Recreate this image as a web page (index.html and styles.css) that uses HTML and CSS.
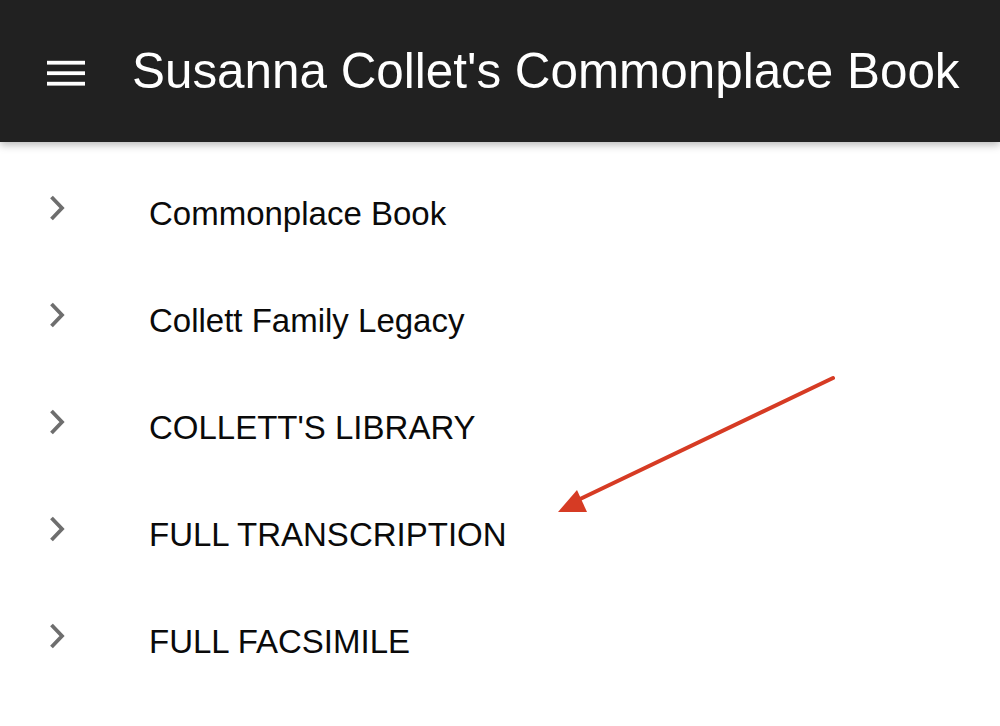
FILE: index.html
```html
<!DOCTYPE html>
<html lang="en">
<head>
<meta charset="utf-8">
<title>Susanna Collet's Commonplace Book</title>
<link rel="stylesheet" href="styles.css">
</head>
<body>
<header class="topbar">
  <svg class="menu-icon" width="38" height="26" viewBox="0 0 38 26" aria-hidden="true">
    <rect x="0" y="0.8" width="38" height="3.8" fill="#fff"/>
    <rect x="0" y="11.3" width="38" height="3.8" fill="#fff"/>
    <rect x="0" y="21.8" width="38" height="3.8" fill="#fff"/>
  </svg>
  <h1 class="title">Susanna Collet's Commonplace Book</h1>
</header>
<main class="nav">
  <div class="nav-item">
    <svg class="chevron" width="18" height="28" viewBox="0 0 18 28" aria-hidden="true"><path d="M3.5 3 L14 14 L3.5 25" fill="none" stroke="#6e6e6e" stroke-width="3.8"/></svg>
    <span class="label">Commonplace Book</span>
  </div>
  <div class="nav-item">
    <svg class="chevron" width="18" height="28" viewBox="0 0 18 28" aria-hidden="true"><path d="M3.5 3 L14 14 L3.5 25" fill="none" stroke="#6e6e6e" stroke-width="3.8"/></svg>
    <span class="label">Collett Family Legacy</span>
  </div>
  <div class="nav-item">
    <svg class="chevron" width="18" height="28" viewBox="0 0 18 28" aria-hidden="true"><path d="M3.5 3 L14 14 L3.5 25" fill="none" stroke="#6e6e6e" stroke-width="3.8"/></svg>
    <span class="label">COLLETT'S LIBRARY</span>
  </div>
  <div class="nav-item">
    <svg class="chevron" width="18" height="28" viewBox="0 0 18 28" aria-hidden="true"><path d="M3.5 3 L14 14 L3.5 25" fill="none" stroke="#6e6e6e" stroke-width="3.8"/></svg>
    <span class="label">FULL TRANSCRIPTION</span>
  </div>
  <div class="nav-item">
    <svg class="chevron" width="18" height="28" viewBox="0 0 18 28" aria-hidden="true"><path d="M3.5 3 L14 14 L3.5 25" fill="none" stroke="#6e6e6e" stroke-width="3.8"/></svg>
    <span class="label">FULL FACSIMILE</span>
  </div>
</main>
<svg class="annotation" width="1000" height="726" viewBox="0 0 1000 726" aria-hidden="true">
  <line x1="833" y1="378" x2="578" y2="500" stroke="#d63b24" stroke-width="4" stroke-linecap="round"/>
  <polygon points="558,512 577,490 587,512" fill="#d63b24"/>
</svg>
</body>
</html>
```
FILE: styles.css
```css
html, body {
  margin: 0;
  padding: 0;
  background: #ffffff;
}

body {
  font-family: "Liberation Sans", Arial, Helvetica, sans-serif;
  width: 1000px;
  height: 726px;
  overflow: hidden;
  position: relative;
}

.topbar {
  height: 142px;
  background: #212121;
  display: flex;
  align-items: center;
  padding-left: 47px;
  box-shadow: 0 3px 8px rgba(0, 0, 0, 0.28);
  position: relative;
  z-index: 1;
}

.menu-icon {
  display: block;
  flex: none;
  margin-top: 4px;
}

.title {
  margin: 0 0 0 47px;
  font-size: 49.4px;
  font-weight: normal;
  color: #ffffff;
  line-height: 1;
}

.nav {
  padding-top: 18px;
}

.nav-item {
  height: 107px;
  display: flex;
  align-items: center;
  padding-left: 48px;
}

.chevron {
  display: block;
  flex: none;
  margin-top: -12px;
}

.label {
  margin-left: 83px;
  font-size: 33px;
  color: #0a0a0a;
  line-height: 1;
}

.annotation {
  position: absolute;
  left: 0;
  top: 0;
  pointer-events: none;
}
```
